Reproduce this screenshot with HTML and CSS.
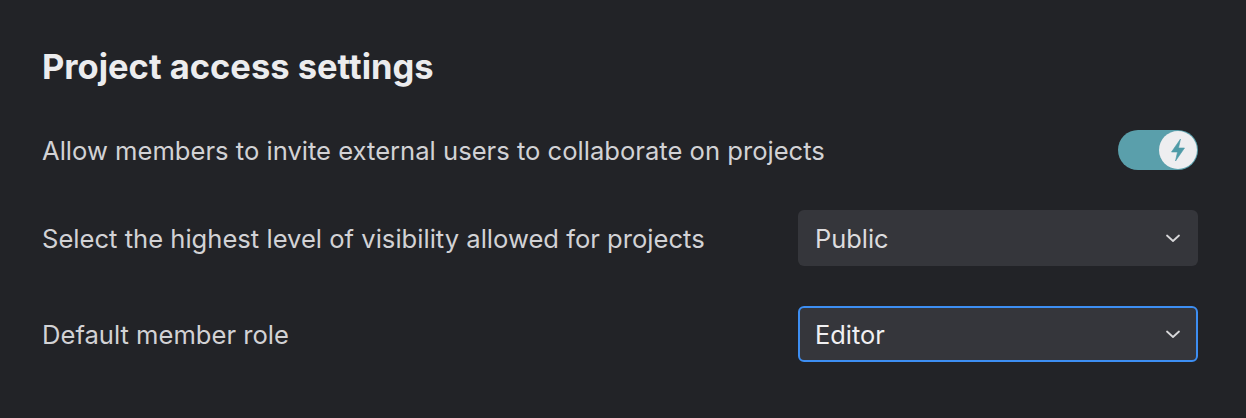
FILE: index.html
```html
<!DOCTYPE html>
<html>
<head>
    <title>Project access settings</title>
    <link rel="stylesheet" href="styles.css">
</head>
<body>
    <div class="panel">
        <h1>Project access settings</h1>

        <div class="row row-toggle">
            <label>Allow members to invite external users to collaborate on projects</label>
            <button class="toggle on" aria-pressed="true">
                <span class="knob">
                    <svg width="16" height="24" viewBox="0 0 16 24"><path d="M10.5 1 L1.5 14 H7.5 L5.5 23 L14.5 10 H8.5 Z" fill="#4f9ba7" stroke="#4f9ba7" stroke-width="0.6" stroke-linejoin="round"/></svg>
                </span>
            </button>
        </div>

        <div class="row">
            <label>Select the highest level of visibility allowed for projects</label>
            <div class="select">
                <span>Public</span>
                <svg class="chev" width="16" height="16" viewBox="0 0 16 16"><path d="M2 5.5 L8 11 L14 5.5" fill="none" stroke="#d8d8da" stroke-width="1.8" stroke-linecap="round" stroke-linejoin="round"/></svg>
            </div>
        </div>

        <div class="row">
            <label>Default member role</label>
            <div class="select focused">
                <span>Editor</span>
                <svg class="chev" width="16" height="16" viewBox="0 0 16 16"><path d="M2 5.5 L8 11 L14 5.5" fill="none" stroke="#d8d8da" stroke-width="1.8" stroke-linecap="round" stroke-linejoin="round"/></svg>
            </div>
        </div>
    </div>
</body>
</html>
```

FILE: styles.css
```css
body { margin: 0; background: #222327; font-family: Inter, "Noto Sans", sans-serif; color: #e6e6e8; }
.panel { padding: 46px 48px 0 42px; }
h1 { margin: 0 0 42px; font-size: 34.5px; font-weight: 700; line-height: 42px; color: #ececee; }
.row {
    display: flex;
    align-items: center;
    justify-content: space-between;
    height: 56px;
    margin-bottom: 40px;
}
.row-toggle { height: 40px; margin-bottom: 40px; }
.row label { font-size: 25.6px; color: #d2d2d5; }
.toggle {
    width: 80px;
    height: 40px;
    border: none;
    border-radius: 20px;
    background: #5a9fab;
    padding: 1px;
    display: flex;
    justify-content: flex-end;
    cursor: pointer;
}
.knob {
    width: 38px;
    height: 38px;
    border-radius: 50%;
    background: #eeeef0;
    display: flex;
    align-items: center;
    justify-content: center;
}
.select {
    width: 400px;
    height: 56px;
    box-sizing: border-box;
    background: #35363b;
    border-radius: 6px;
    display: flex;
    align-items: center;
    justify-content: space-between;
    padding: 0 17px 0 17px;
    font-size: 25.4px;
    color: #dcdcde;
}
.select.focused { border: 2px solid #3d8ef2; padding: 0 15px 0 15px; color: #f0f0f2; }
```
